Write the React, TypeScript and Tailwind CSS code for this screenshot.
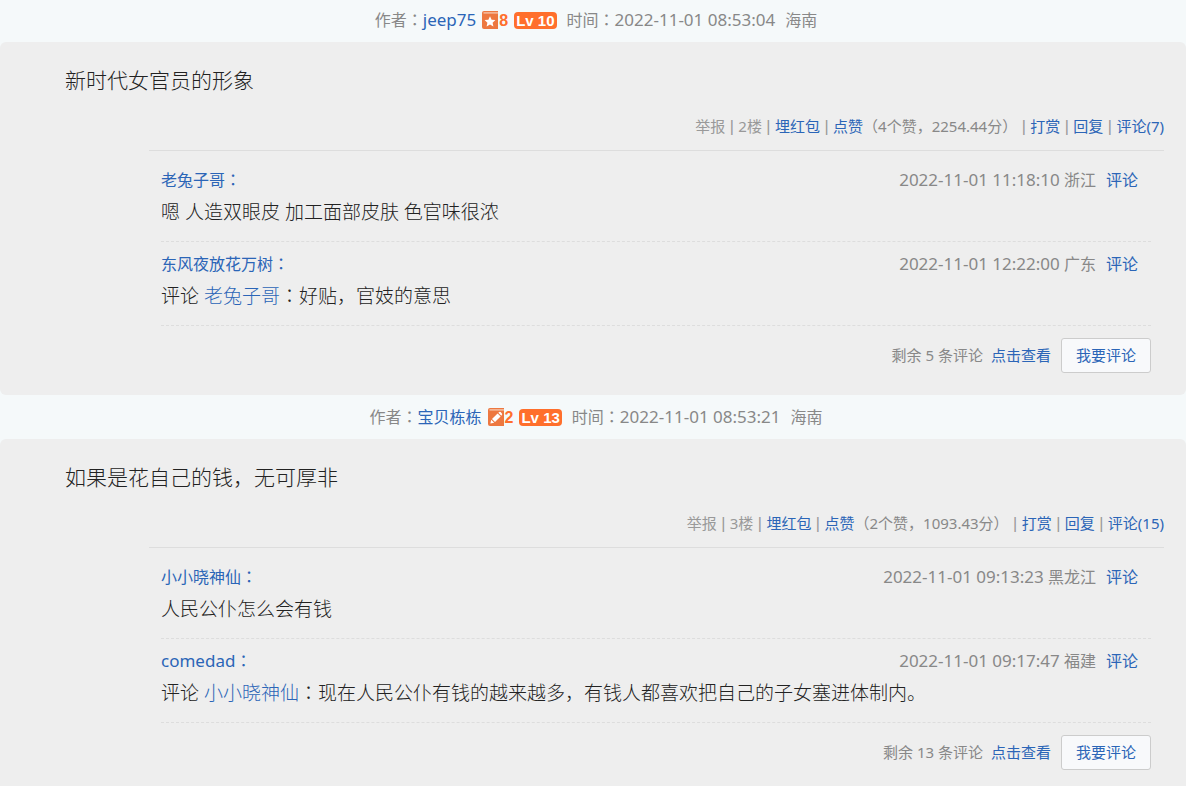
import React from 'react';

interface Comment {
  user: string;
  time: string;
  place: string;
  replyTo?: string;
  text: string;
}

interface Post {
  author: string;
  badge: 'star' | 'pencil';
  badgeCount: number;
  level: number;
  time: string;
  place: string;
  text: string;
  floor: number;
  likes: number;
  score: string;
  replies: number;
  comments: Comment[];
  remaining: number;
}

const posts: Post[] = [
  {
    author: 'jeep75',
    badge: 'star',
    badgeCount: 8,
    level: 10,
    time: '2022-11-01 08:53:04',
    place: '海南',
    text: '新时代女官员的形象',
    floor: 2,
    likes: 4,
    score: '2254.44',
    replies: 7,
    comments: [
      {
        user: '老兔子哥',
        time: '2022-11-01 11:18:10',
        place: '浙江',
        text: '嗯 人造双眼皮 加工面部皮肤 色官味很浓',
      },
      {
        user: '东风夜放花万树',
        time: '2022-11-01 12:22:00',
        place: '广东',
        replyTo: '老兔子哥',
        text: '好贴，官妓的意思',
      },
    ],
    remaining: 5,
  },
  {
    author: '宝贝栋栋',
    badge: 'pencil',
    badgeCount: 2,
    level: 13,
    time: '2022-11-01 08:53:21',
    place: '海南',
    text: '如果是花自己的钱，无可厚非',
    floor: 3,
    likes: 2,
    score: '1093.43',
    replies: 15,
    comments: [
      {
        user: '小小晓神仙',
        time: '2022-11-01 09:13:23',
        place: '黑龙江',
        text: '人民公仆怎么会有钱',
      },
      {
        user: 'comedad',
        time: '2022-11-01 09:17:47',
        place: '福建',
        replyTo: '小小晓神仙',
        text: '现在人民公仆有钱的越来越多，有钱人都喜欢把自己的子女塞进体制内。',
      },
    ],
    remaining: 13,
  },
];

// The TC face centres the full-width colon in its cell
const Colon: React.FC = () => (
  <span className="font-['Noto_Sans_CJK_TC',sans-serif] leading-none">：</span>
);

const Latin: React.FC<{ children: React.ReactNode }> = ({ children }) => (
  <span className="text-[17px]">{children}</span>
);

const isLatin = (name: string) => /^[\w-]+$/.test(name);

const UserName: React.FC<{ name: string }> = ({ name }) => (
  <a href="#user" className="text-[#2b65b7]">
    {isLatin(name) ? <Latin>{name}</Latin> : name}
  </a>
);

const BookIcon: React.FC<{ kind: Post['badge'] }> = ({ kind }) => (
  <svg width="16" height="18" viewBox="0 0 16 18" aria-hidden="true">
    <path d="M0 2Q0 0 2 0H16V18H2Q0 18 0 16Z" fill="#ed7840" />
    <path d="M1.5 1.2H16V2.6H1.5Z" fill="#f6c3a8" />
    {kind === 'star' ? (
      <path
        d="M8 5.2L9.6 8.7L13.4 9.1L10.6 11.7L11.4 15.5L8 13.5L4.6 15.5L5.4 11.7L2.6 9.1L6.4 8.7Z"
        fill="#fff"
      />
    ) : (
      <>
        <path d="M2.4 15.6L3.2 11.8L6.2 14.8Z" fill="#fff" />
        <path d="M4 11L9.6 5.4L12.6 8.4L7 14Z" fill="#fff" />
        <path d="M10.3 4.7L11.3 3.9Q12 3.6 12.6 4.1L13.9 5.4Q14.4 6 14 6.8L13.3 7.7Z" fill="#fff" />
      </>
    )}
  </svg>
);

const Divider: React.FC = () => (
  <span className="font-['Liberation_Sans',sans-serif] text-base leading-none"> | </span>
);

const PostHeader: React.FC<{ post: Post }> = ({ post }) => (
  <header className="flex h-[42px] items-center justify-center pb-0.5 pl-1.5 text-base text-[#888]">
    <span>
      作者
      <Colon />
      <UserName name={post.author} />
    </span>
    <span className="ml-1.5 flex items-end font-['Liberation_Sans',sans-serif] font-bold">
      <BookIcon kind={post.badge} />
      <span className="ml-px text-base leading-4 text-[#ff6f2c]">{post.badgeCount}</span>
      <span className="ml-1.5 h-[17px] rounded-sm bg-[#ff6f2c] px-0.5 text-[15px] leading-[17px] text-white">
        Lv {post.level}
      </span>
    </span>
    <span className="ml-2.5">
      时间
      <Colon />
      <Latin>{post.time}</Latin>
    </span>
    <span className="ml-2.5">{post.place}</span>
  </header>
);

const CommentItem: React.FC<{ comment: Comment }> = ({ comment }) => (
  <li className="border-b border-dashed border-[#ddd] pt-3 pb-[15px]">
    <div className="flex h-5 items-center justify-between pr-[13px] text-base">
      <span className="text-[#2b65b7]">
        <UserName name={comment.user} />
        <Colon />
      </span>
      <span className="text-[#888]">
        <Latin>{comment.time}</Latin> {comment.place}
        <a href="#reply" className="ml-2.5 text-[#2b65b7]">
          评论
        </a>
      </span>
    </div>
    <p className="mt-2 text-[19px] leading-7 font-light text-[#222]">
      {comment.replyTo && (
        <>
          评论{' '}
          <a href="#user" className="text-[#2b65b7]">
            {comment.replyTo}
          </a>
          <Colon />
        </>
      )}
      {comment.text}
    </p>
  </li>
);

const PostPanel: React.FC<{ post: Post }> = ({ post }) => (
  <section className="rounded-md bg-[#eee] pt-[23px] pr-[22px] pb-[22px]">
    <p className="pl-[65px] text-[21px] leading-[30px] font-light text-[#222]">{post.text}</p>

    <div className="mt-5 ml-[149px] border-b border-[#ddd] pb-[13px] text-right text-[15px] leading-[22px] text-[#999]">
      <a href="#report">举报</a>
      <Divider />
      {post.floor}楼
      <Divider />
      <a href="#packet" className="text-[#2b65b7]">埋红包</a>
      <Divider />
      <a href="#like" className="text-[#2b65b7]">点赞</a>
      <span className="text-[#888]">
        （{post.likes}个赞，{post.score}分）
      </span>
      <Divider />
      <a href="#reward" className="text-[#2b65b7]">打赏</a>
      <Divider />
      <a href="#answer" className="text-[#2b65b7]">回复</a>
      <Divider />
      <a href="#comments" className="text-[#2b65b7]">评论({post.replies})</a>
    </div>

    <div className="ml-[149px] pt-[7px] pr-[13px] pl-3">
      <ul>
        {post.comments.map((comment) => (
          <CommentItem key={comment.time} comment={comment} />
        ))}
      </ul>
      <div className="mt-3 flex items-center justify-end text-[15px] text-[#888]">
        <span>剩余 {post.remaining} 条评论</span>
        <a href="#more" className="ml-2 text-[#2b65b7]">
          点击查看
        </a>
        <button
          type="button"
          className="ml-2.5 h-[35px] w-[90px] rounded-[3px] border border-[#ccc] bg-[#f8f9fb] text-[#2b65b7]"
        >
          我要评论
        </button>
      </div>
    </div>
  </section>
);

const App: React.FC = () => (
  <main className="flex flex-col gap-0.5 bg-[#f5f9fa] font-['Noto_Sans','Noto_Sans_CJK_SC',sans-serif]">
    {posts.map((post) => (
      <article key={post.time}>
        <PostHeader post={post} />
        <PostPanel post={post} />
      </article>
    ))}
  </main>
);

export default App;
